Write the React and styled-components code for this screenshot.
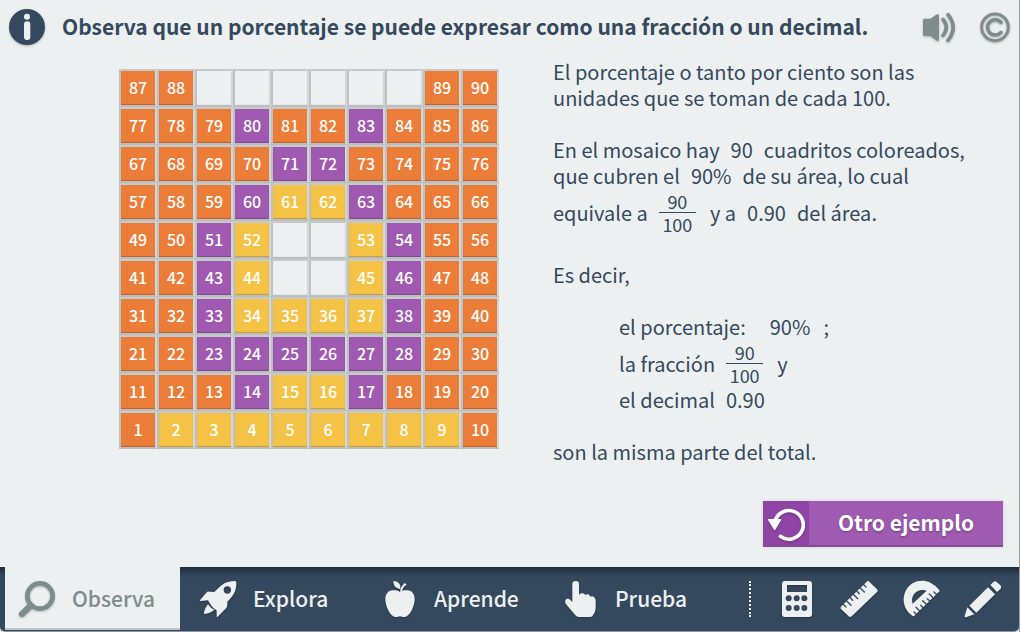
import React from "react";
import styled, { createGlobalStyle } from "styled-components";

const GlobalStyle = createGlobalStyle`
  *, *::before, *::after { box-sizing: border-box; }
  body {
    margin: 0;
    background: #ecf0f1;
    color: #34495e;
    font-family: "Noto Sans CJK SC", "Noto Sans", sans-serif;
  }
  button { font: inherit; border: 0; cursor: pointer; }
`;

const Page = styled.div`
  display: flex;
  flex-direction: column;
  min-height: 100vh;
  border-right: 1px solid #9a9a9c;
`;

const Header = styled.header`
  display: flex;
  align-items: center;
  height: 54px;
  padding: 0 4px 0 7px;
`;

const Title = styled.h1`
  flex: 1;
  margin: 0 0 0 15px;
  padding-bottom: 2px;
  font-size: 21px;
  font-weight: 700;
  line-height: 32px;
  white-space: nowrap;
`;

const HeaderActions = styled.div`
  display: flex;
  gap: 16px;
`;

const IconButton = styled.button`
  display: flex;
  align-items: center;
  justify-content: center;
  width: ${(p) => p.$width || 40}px;
  height: 40px;
  padding: 0;
  background: none;
  color: ${(p) => p.$color || "#ecf0f1"};
`;

const Glyph = styled.svg`
  flex: none;
  display: block;
  width: ${(p) => p.$size || 40}px;
  height: ${(p) => p.$size || 40}px;
  filter: drop-shadow(0 1px 1px rgba(0, 0, 0, 0.25));
`;

const Main = styled.main`
  flex: 1;
  display: flex;
  align-items: flex-start;
  padding: 0 16px 20px 119px;
`;

const Mosaic = styled.div`
  flex: none;
  display: grid;
  grid-template-columns: repeat(10, 38px);
  grid-auto-rows: 38px;
  margin-top: 15px;
`;

const fills = { o: "#eb7d38", p: "#9f59b0", y: "#f4c245", _: "#ecf0f1" };

const Cell = styled.div`
  display: flex;
  align-items: center;
  justify-content: center;
  padding-bottom: 2px;
  border: 2px solid;
  border-color: #c6cacb #d2d6d7 #babebf #bec2c3;
  background: ${(p) => fills[p.$fill]};
  box-shadow: inset 0 -1px 1px rgba(0, 0, 0, ${(p) => (p.$fill === "_" ? 0.04 : 0.2)});
  color: #fff;
  font-size: 16px;
  font-weight: 500;
  line-height: 24px;
`;

const Side = styled.div`
  flex: 1;
  display: flex;
  flex-direction: column;
  align-self: stretch;
  margin: 5px 0 0 54px;
`;

const Text = styled.div`
  font-size: 20px;
  line-height: 26px;
  white-space: nowrap;
`;

const Paragraph = styled.p`
  margin: 0 0 26px;
`;

const Line = styled.span`
  display: flex;
  align-items: center;
  height: ${(p) => (p.$tall ? 47 : 26)}px;
  gap: 11px;
`;

const Summary = styled.ul`
  margin: 0 0 26px;
  padding: 0 0 0 66px;
  list-style: none;
`;

const SpacedValue = styled.span`
  margin: 0 2px 0 13px;
`;

const FractionBox = styled.span`
  display: flex;
  flex-direction: column;
  align-items: center;
  width: 37px;
  margin-right: 3px;
  font-size: 18px;
  line-height: 22px;
`;

const Numerator = styled.span`
  width: 100%;
  border-bottom: 1px solid #34495e;
  text-align: center;
`;

const OtherExample = styled.button`
  display: flex;
  align-items: center;
  align-self: flex-end;
  width: 240px;
  height: 46px;
  margin-top: auto;
  padding: 0;
  background: #9f5ab1;
  box-shadow: inset 0 -2px 0 #864b96, 0 0 4px rgba(0, 0, 0, 0.12);
  color: #fff;
`;

const OtherIcon = styled.span`
  width: 46px;
  height: 44px;
  align-self: flex-start;
  background: #8f44a6;
`;

const OtherLabel = styled.span`
  flex: 1;
  padding-bottom: 4px;
  font-size: 21px;
  font-weight: 700;
  line-height: 32px;
  text-align: center;
  text-shadow: 0 1px 2px rgba(0, 0, 0, 0.3);
`;

const Footer = styled.footer`
  display: flex;
  height: 65px;
  padding: 0 5px;
  border-bottom: 1px solid #8d9499;
  border-radius: 0 0 5px 5px;
  background: linear-gradient(#202e3b, #34495e 10px);
`;

const Tabs = styled.nav`
  flex: 1;
  display: flex;
  gap: 6px;
`;

const Tab = styled.a`
  display: flex;
  align-items: center;
  gap: 14px;
  width: 175px;
  height: 63px;
  padding: 0 0 0 13px;
  background: ${(p) => (p.$active ? "#ecf0f1" : "transparent")};
  box-shadow: ${(p) => (p.$active ? "inset 0 -2px 0 #bdc3c4" : "none")};
  color: ${(p) => (p.$active ? "#7f8c8d" : "#ecf0f1")};
  font-size: 21px;
  font-weight: 500;
  line-height: 30px;
  text-decoration: none;
`;

const TabLabel = styled.span`
  padding-bottom: 2px;
`;

const Tools = styled.div`
  display: flex;
  align-items: center;
  height: 63px;
  padding-left: 15px;
`;

const Divider = styled.span`
  height: 36px;
  margin-top: 14px;
  border-left: 2px dotted #ecf0f1;
`;

const Icon = ({ children, size, box = "0 0 120 120" }) => (
  <Glyph $size={size} viewBox={box} fill="currentColor" aria-hidden="true">
    {children}
  </Glyph>
);

const InfoIcon = () => (
  <Icon>
    <circle cx="60" cy="60" r="54" fill="#34495e" />
    <circle cx="60" cy="29" r="9" fill="#ecf0f1" />
    <rect x="51" y="43" width="19" height="56" rx="9" fill="#ecf0f1" />
  </Icon>
);

const SpeakerIcon = () => (
  <Icon>
    <path d="M16 35H34L54 22Q60 19 60 26V97Q60 104 54 101L34 87H16Q12 87 12 83V39Q12 35 16 35Z" />
    <path d="M72 37Q92 61 72 85M87 23Q118 61 87 100" fill="none" stroke="currentColor" strokeWidth="11" strokeLinecap="round" />
  </Icon>
);

const CopyrightIcon = () => (
  <Icon>
    <circle cx="60" cy="61" r="40" fill="none" stroke="currentColor" strokeWidth="9" />
    <path d="M78 46A23 23 0 1 0 78 76" fill="none" stroke="currentColor" strokeWidth="11" strokeLinecap="round" />
  </Icon>
);

const LensIcon = () => (
  <Icon>
    <circle cx="66" cy="51" r="38" fill="none" stroke="currentColor" strokeWidth="14" />
    <path d="M38 80L12 105" stroke="currentColor" strokeWidth="19" strokeLinecap="round" />
  </Icon>
);

const RocketIcon = () => (
  <Icon>
    <path fillRule="evenodd" d="M106 6Q112 5 112 12C112 38 101 53 85 68Q86 80 82 87L56 113Q53 115 53 111V94Q42 89 32 72L27 64L5 66Q1 66 4 62L22 41Q25 37 31 38L46 39L61 25C75 11 88 7 106 6ZM85 22a11 11 0 1 0 0 22a11 11 0 1 0 0-22Z" />
    <path d="M27 76Q34 88 46 92Q36 102 15 105Q15 91 27 76Z" />
  </Icon>
);

const AppleIcon = () => (
  <Icon>
    <path d="M60 39C66 33 76 33 84 34C98 36 104 48 104 61C104 80 92 107 78 113Q70 116 60 112Q50 116 42 113C28 107 16 80 16 61C16 48 22 36 36 34C44 33 54 33 60 39Z" />
    <path d="M40 6C54 6 63 15 61 30C47 28 40 20 40 6Z" />
    <path d="M60 38Q61 24 74 12L80 17Q67 24 66 38Z" />
  </Icon>
);

const HandIcon = () => (
  <Icon>
    <path d="M34 16Q34 6 44 6Q54 6 54 16V47Q58 41 65 43Q70 44 73 48Q80 43 87 50L89 53Q99 49 103 60Q104 63 104 68V88Q104 99 95 110Q92 114 86 114H54Q47 114 42 107L14 74Q10 64 16 60Q22 57 28 63L34 69Z" />
  </Icon>
);

const CalculatorIcon = () => (
  <Icon>
    <path fillRule="evenodd" d="M24 6H96Q105 6 105 15V105Q105 114 96 114H24Q15 114 15 105V15Q15 6 24 6ZM30 18V39H90V18Z" />
    {[58, 87].map((y) => [35, 59, 82].map((x) => <circle key={x + "-" + y} cx={x} cy={y} r="9" fill="#34495e" />))}
  </Icon>
);

const RulerIcon = () => (
  <Icon>
    <path d="M83 8Q87 4 91 8L114 31Q118 35 114 39L38 112Q33 116 29 112L6 90Q3 86 7 82Z" />
    {[0, 1, 2, 3, 4, 5, 6].map((i) => (
      <path key={i} d={`M${12 + i * 10} ${75 - i * 10}l${i % 2 ? 14 : 9} ${i % 2 ? 14 : 9}`} stroke="#34495e" strokeWidth="4" strokeLinecap="round" />
    ))}
  </Icon>
);

const ProtractorIcon = () => (
  <Icon>
    <path fillRule="evenodd" d="M114 32Q118 36 113 39L40 110Q36 114 32 109C10 92 1 62 14 36C28 5 64-1 88 11Q104 19 114 32ZM35 74L77 35C66 31 51 32 42 42C33 52 31 62 35 74Z" />
    {[0, 1, 2, 3, 4, 5, 6].map((i) => (
      <path key={i} d={`M${46 + i * 10} ${106 - i * 10}l${i % 2 ? -11 : -7} ${i % 2 ? -11 : -7}`} stroke="#34495e" strokeWidth="4" strokeLinecap="round" />
    ))}
  </Icon>
);

const PencilIcon = () => (
  <Icon>
    <path d="M82 18L91 9Q96 4 101 9L112 19Q117 25 112 30L102 39Z" />
    <path d="M75 25L96 46L40 101L19 80Z" />
    <path d="M13 85L34 106L9 115Q4 116 5 111Z" />
  </Icon>
);

const RestartIcon = () => (
  <Icon size={46} box="0 0 138 138">
    <path d="M37 58A43 43 0 1 1 52 106" fill="none" stroke="currentColor" strokeWidth="11" strokeLinecap="round" />
    <path d="M17 54H53Q56 55 54 58L37 86Q35 88 33 86L15 57Q14 54 17 54Z" />
  </Icon>
);

const Fraction = ({ top, bottom }) => (
  <FractionBox>
    <Numerator>{top}</Numerator>
    <span>{bottom}</span>
  </FractionBox>
);

const rows = [
  "87o 88o _ _ _ _ _ _ 89o 90o",
  "77o 78o 79o 80p 81o 82o 83p 84o 85o 86o",
  "67o 68o 69o 70o 71p 72p 73o 74o 75o 76o",
  "57o 58o 59o 60p 61y 62y 63p 64o 65o 66o",
  "49o 50o 51p 52y _ _ 53y 54p 55o 56o",
  "41o 42o 43p 44y _ _ 45y 46p 47o 48o",
  "31o 32o 33p 34y 35y 36y 37y 38p 39o 40o",
  "21o 22o 23p 24p 25p 26p 27p 28p 29o 30o",
  "11o 12o 13o 14p 15y 16y 17p 18o 19o 20o",
  "1o 2y 3y 4y 5y 6y 7y 8y 9y 10o",
].map((row) => row.split(" ").map((c) => ({ number: c.slice(0, -1), fill: c.slice(-1) })));

const tabs = [
  ["Observa", LensIcon],
  ["Explora", RocketIcon],
  ["Aprende", AppleIcon],
  ["Prueba", HandIcon],
];

const tools = [
  ["Calculadora", CalculatorIcon],
  ["Regla", RulerIcon],
  ["Transportador", ProtractorIcon],
  ["Lápiz", PencilIcon],
];

export default function App() {
  return (
    <Page>
      <GlobalStyle />
      <Header>
        <InfoIcon />
        <Title>Observa que un porcentaje se puede expresar como una fracción o un decimal.</Title>
        <HeaderActions>
          <IconButton $color="#7f8c8d" aria-label="Audio"><SpeakerIcon /></IconButton>
          <IconButton $color="#7f8c8d" aria-label="Créditos"><CopyrightIcon /></IconButton>
        </HeaderActions>
      </Header>
      <Main>
        <Mosaic>
          {rows.flatMap((row, r) =>
            row.map((cell, c) => (
              <Cell key={r + "-" + c} $fill={cell.fill}>{cell.number}</Cell>
            ))
          )}
        </Mosaic>
        <Side>
          <Text>
            <Paragraph>
              <Line>El porcentaje o tanto por ciento son las</Line>
              <Line>unidades que se toman de cada 100.</Line>
            </Paragraph>
            <Paragraph>
              <Line><span>En el mosaico hay</span><span>90</span><span>cuadritos coloreados,</span></Line>
              <Line><span>que cubren el</span><span>90%</span><span>de su área, lo cual</span></Line>
              <Line $tall><span>equivale a</span><Fraction top="90" bottom="100" /><span>y a</span><span>0.90</span><span>del área.</span></Line>
            </Paragraph>
            <Paragraph>Es decir,</Paragraph>
            <Summary>
              <li><Line><span>el porcentaje:</span><SpacedValue>90%</SpacedValue><span>;</span></Line></li>
              <li><Line $tall><span>la fracción</span><Fraction top="90" bottom="100" /><span>y</span></Line></li>
              <li><Line><span>el decimal</span><span>0.90</span></Line></li>
            </Summary>
            <Paragraph>son la misma parte del total.</Paragraph>
          </Text>
          <OtherExample>
            <OtherIcon><RestartIcon /></OtherIcon>
            <OtherLabel>Otro ejemplo</OtherLabel>
          </OtherExample>
        </Side>
      </Main>
      <Footer>
        <Tabs>
          {tabs.map(([label, TabIcon], i) => (
            <Tab key={label} href={"#" + label.toLowerCase()} $active={i === 0}>
              <TabIcon />
              <TabLabel>{label}</TabLabel>
            </Tab>
          ))}
        </Tabs>
        <Divider />
        <Tools>
          {tools.map(([label, ToolIcon]) => (
            <IconButton key={label} $width={62} aria-label={label}><ToolIcon /></IconButton>
          ))}
        </Tools>
      </Footer>
    </Page>
  );
}
